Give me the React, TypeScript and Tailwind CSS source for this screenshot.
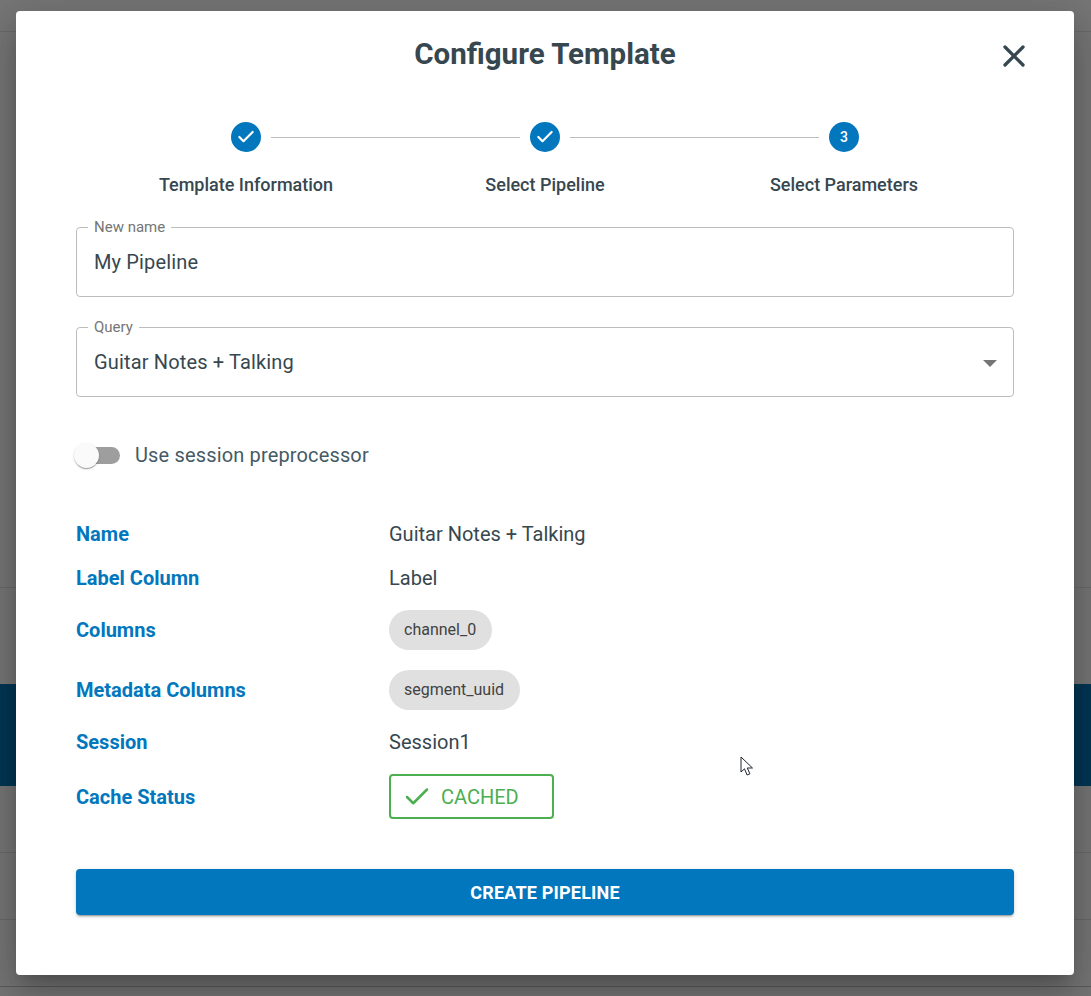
import React from 'react';
import { Check, X } from 'lucide-react';

const font = { fontFamily: 'Roboto, sans-serif' };

function Step({ label, n }: { label: string; n?: number }) {
  return (
    <div className="flex w-[299px] flex-col items-center">
      <div className="flex h-[30px] w-[30px] items-center justify-center rounded-full bg-[#0277bd] text-[14px] font-medium leading-none text-white">
        {n ?? <Check size={20} strokeWidth={2.6} />}
      </div>
      <div className="mt-[22px] text-[18px] font-medium leading-[22px] text-[#37474f]">{label}</div>
    </div>
  );
}

function Field({ label, value, select }: { label: string; value: string; select?: boolean }) {
  return (
    <div className="relative flex h-[70px] items-start rounded border border-[#bdbdbd] px-[17px] pt-[20px]">
      <span className="absolute -top-[10px] left-[11px] bg-white px-[6px] text-[15px] leading-[18px] text-[#757575]">{label}</span>
      <span className="text-[20px] leading-[28px] tracking-[0.15px] text-[#37474f]">{value}</span>
      {select && <span className="absolute right-[16px] top-[32px] h-0 w-0 border-x-[7px] border-t-[7px] border-x-transparent border-t-[#757575]" />}
    </div>
  );
}

function Row({ label, height, children }: { label: string; height: string; children: React.ReactNode }) {
  return (
    <div className={`flex items-center ${height}`}>
      <div className="w-[313px] text-[20px] font-bold leading-[24px] text-[#0277bd]">{label}</div>
      <div className="text-[20px] leading-[24px] text-[#37474f]">{children}</div>
    </div>
  );
}

function Chip({ text }: { text: string }) {
  return <span className="inline-flex h-10 items-center rounded-full bg-[#e0e0e0] pl-[15px] pr-[16px] text-[16px] text-[#424242]">{text}</span>;
}

export default function App() {
  return (
    <div style={font} className="relative h-[996px] w-full overflow-hidden bg-[#767676]">
      {/* page behind the dialog */}
      <div className="h-[32px] border-b border-[#6a6a6a]" />
      <div className="h-[556px] border-b border-[#6a6a6a]" />
      <div className="h-[96px]" />
      <div className="h-[102px] bg-[#003654]" />
      <div className="h-[67px] border-b border-[#6a6a6a]" />
      <div className="h-[67px] border-b border-[#6a6a6a]" />
      <div className="h-[67px] border-b border-[#5c5c5c]" />

      <div className="absolute left-4 top-[11px] h-[964px] w-[1058px] rounded bg-white px-[60px] shadow-[0_11px_15px_-7px_rgba(0,0,0,0.2),0_24px_38px_3px_rgba(0,0,0,0.14),0_9px_46px_8px_rgba(0,0,0,0.12)]">
        <h1 className="pt-[24px] text-center text-[29.5px] font-bold leading-[38px] text-[#37474f]">Configure Template</h1>
        <X size={36} strokeWidth={2.2} className="absolute right-[42px] top-[27px] text-[#37474f]" />

        <div className="relative mt-[49px] flex justify-center">
          <div className="absolute left-[195px] top-[15px] h-px w-[249px] bg-[#bdbdbd]" />
          <div className="absolute left-[494px] top-[15px] h-px w-[249px] bg-[#bdbdbd]" />
          <Step label="Template Information" />
          <Step label="Select Pipeline" />
          <Step label="Select Parameters" n={3} />
        </div>

        <div className="mt-[31px] flex flex-col gap-[30px]">
          <Field label="New name" value="My Pipeline" />
          <Field label="Query" value="Guitar Notes + Talking" select />
        </div>

        <div className="mt-[44px] flex h-[28px] items-center">
          <div className="relative ml-[2px] h-[17px] w-[42px] rounded-full bg-[#9e9e9e]">
            <span className="absolute -left-[4px] -top-[4px] h-[25px] w-[25px] rounded-full bg-[#fafafa] shadow-[0_2px_1px_-1px_rgba(0,0,0,0.2),0_1px_1px_rgba(0,0,0,0.14),0_1px_3px_rgba(0,0,0,0.12)]" />
          </div>
          <span className="ml-[15px] text-[20px] leading-[28px] tracking-[0.15px] text-[#455a64]">Use session preprocessor</span>
        </div>

        <div className="mt-[43px] flex flex-col">
          <Row label="Name" height="h-[44px]">Guitar Notes + Talking</Row>
          <Row label="Label Column" height="h-[44px]">Label</Row>
          <Row label="Columns" height="h-[60px]"><Chip text="channel_0" /></Row>
          <Row label="Metadata Columns" height="h-[60px]"><Chip text="segment_uuid" /></Row>
          <Row label="Session" height="h-[44px]">Session1</Row>
          <Row label="Cache Status" height="h-[66px]">
            <span className="-mt-px flex h-[45px] w-[165px] items-center rounded border-2 border-[#4caf50] pl-[11px] text-[#4caf50]">
              <Check size={30} strokeWidth={2} />
              <span className="ml-[9px]">CACHED</span>
            </span>
          </Row>
        </div>

        <button className="mt-[39px] h-[46px] w-full rounded bg-[#0277bd] text-[18px] font-bold uppercase tracking-[0.2px] text-white shadow-[0_3px_1px_-2px_rgba(0,0,0,0.2),0_2px_2px_rgba(0,0,0,0.14),0_1px_5px_rgba(0,0,0,0.12)]">
          Create Pipeline
        </button>

        {/* mouse pointer caught in the shot */}
        <svg className="absolute left-[724px] top-[745px]" width="14" height="21" viewBox="0 0 14 21">
          <path d="M1 1v15l3.5-3.2 2.6 6.2 2.8-1.2-2.6-5.8H12.5z" fill="#fff" stroke="#1f2430" strokeWidth="1" />
        </svg>
      </div>
    </div>
  );
}
